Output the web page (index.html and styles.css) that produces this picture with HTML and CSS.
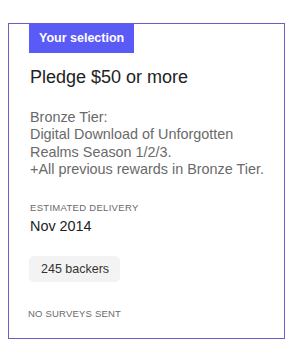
FILE: index.html
```html
<!DOCTYPE html>
<html>
<head>
<meta charset="utf-8">
<link rel="stylesheet" href="styles.css">
</head>
<body>
<div class="card">
  <div class="badge">Your selection</div>
  <h2 class="title">Pledge $50 or more</h2>
  <p class="desc">Bronze Tier:<br>Digital Download of Unforgotten Realms Season 1/2/3.<br>+All previous rewards in Bronze Tier.</p>
  <div class="label">ESTIMATED DELIVERY</div>
  <div class="date">Nov 2014</div>
  <div class="pill">245 backers</div>
  <div class="footer">NO SURVEYS SENT</div>
</div>
</body>
</html>
```
FILE: styles.css
```css
body {
  margin: 0;
  padding: 23px 8px 0 8px;
  background: #fff;
  font-family: "Liberation Sans", Arial, sans-serif;
}
.card {
  width: 277px;
  height: 316px;
  border: 1px solid #6f5cc8;
  padding: 0 20px;
  box-sizing: border-box;
  display: flex;
  flex-direction: column;
  align-items: flex-start;
}
.badge {
  background: #5a5af7;
  color: #fff;
  font-weight: bold;
  font-size: 12.5px;
  height: 29px;
  line-height: 29px;
  padding: 0 10px;
}
.title {
  margin: 12px 0 0 1px;
  font-weight: normal;
  font-size: 18px;
  color: #222;
  line-height: 24px;
}
.desc {
  margin: 20px 0 0 1px;
  font-size: 14.4px;
  line-height: 17.4px;
  color: #6a6a6a;
}
.label {
  margin: 23px 0 0 1px;
  font-size: 9.5px;
  letter-spacing: 0.3px;
  color: #6a6a6a;
}
.date {
  margin: 5px 0 0 1px;
  font-size: 14.4px;
  color: #222;
}
.pill {
  margin-top: 22px;
  background: #f3f3f3;
  border-radius: 5px;
  height: 26px;
  line-height: 26px;
  padding: 0 11px 0 12px;
  font-size: 12.5px;
  color: #333;
}
.footer {
  margin: 26px 0 0 -1px;
  font-size: 9.5px;
  letter-spacing: 0.2px;
  color: #6a6a6a;
}
```
